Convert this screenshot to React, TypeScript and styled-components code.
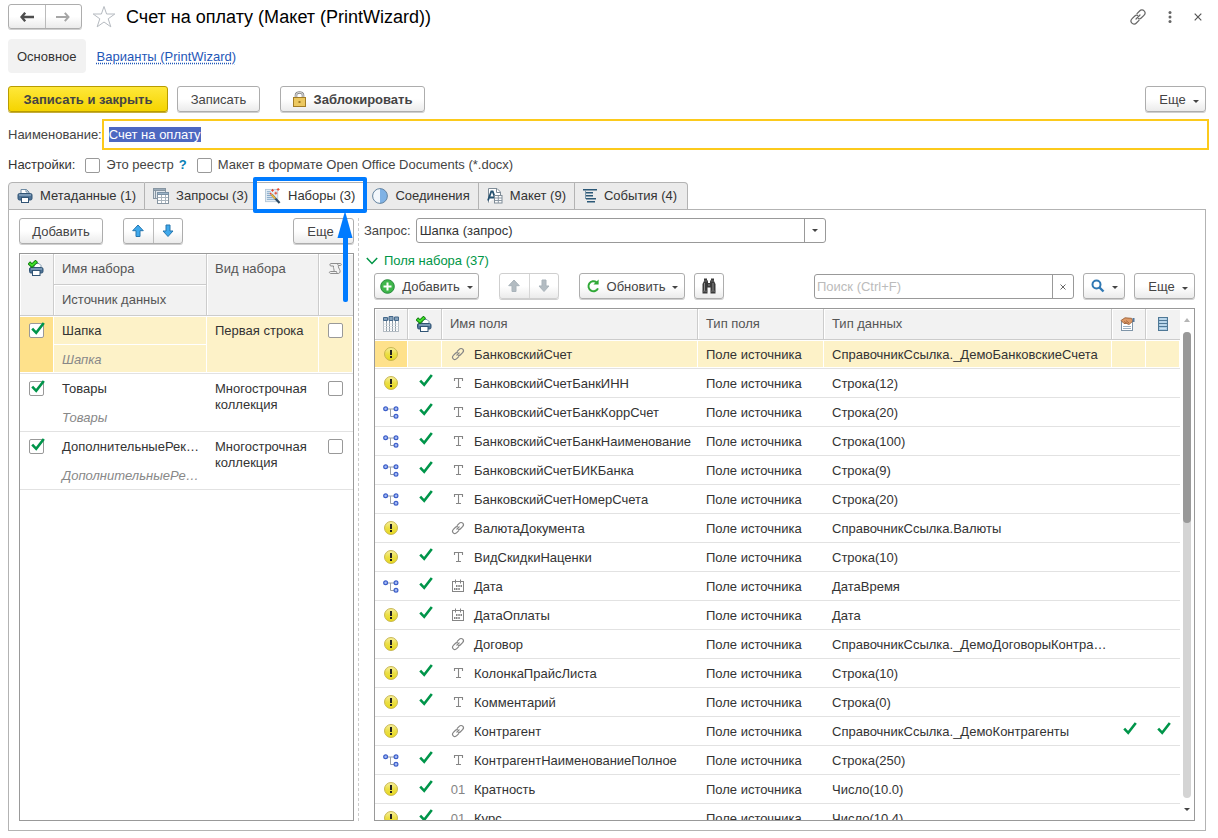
import React, { useEffect, useRef } from "react";
import styled, { createGlobalStyle, css } from "styled-components";

const GlobalStyle = createGlobalStyle`
  *, *::before, *::after { box-sizing: border-box; }
  body {
    margin: 0;
    background: #fff;
    color: #333;
    font: 13px/16px "Liberation Sans", Arial, sans-serif;
  }
  button, input, select { font: inherit; color: inherit; margin: 0; }
  svg { display: block; flex: none; }
`;

/* ---------- icons ---------- */

const ArrowLeft = () => (
  <svg width="14" height="10" viewBox="0 0 14 10">
    <path d="M5.2 .8L1.5 5L5.2 9.2M2 5H14" fill="none" stroke="#4d4d4d" strokeWidth="2.4" />
  </svg>
);
const ArrowRight = () => (
  <svg width="14" height="10" viewBox="0 0 14 10">
    <path d="M8.8 .8L12.5 5L8.8 9.2M12 5H0" fill="none" stroke="#a6a6a6" strokeWidth="2" />
  </svg>
);
const Star = () => (
  <svg width="24" height="24" viewBox="0 0 24 24">
    <path d="M12 1.5L14.6 9H22.8L16.2 13.8L18.8 21.8L12 17L5.2 21.8L7.8 13.8L1.2 9H9.4Z" fill="#fff" stroke="#b5bac0" />
  </svg>
);
const LinkIcon = ({ size = 16, color = "#666" }: { size?: number; color?: string }) => (
  <svg width={size} height={size} viewBox="0 0 16 16" fill="none" stroke={color} strokeWidth="1.2" strokeLinecap="round">
    <path d="M7 4.6L9.6 2C10.9.7 12.8.5 14.1 1.8C15.4 3.1 15.2 5 13.9 6.3L11.2 9C10.3 9.9 9.2 10 8.4 9.6" />
    <path d="M9 11.4L6.4 14C5.1 15.3 3.2 15.5 1.9 14.2C.6 12.9.8 11 2.1 9.7L4.8 7C5.7 6.1 6.8 6 7.6 6.4" />
    <path d="M6 10L10 6" />
  </svg>
);
const Dots = () => (
  <svg width="4" height="12" viewBox="0 0 4 12" fill="#666">
    <circle cx="2" cy="1.6" r="1.5" /><circle cx="2" cy="6" r="1.5" /><circle cx="2" cy="10.4" r="1.5" />
  </svg>
);
const Cross = ({ size = 8 }: { size?: number }) => (
  <svg width={size} height={size} viewBox="0 0 8 8" stroke="#555" strokeWidth="1.2">
    <path d="M.7.7L7.3 7.3M7.3.7L.7 7.3" />
  </svg>
);
const Lock = () => (
  <svg width="14" height="16" viewBox="0 0 14 16">
    <path d="M3 8V4C3 .6 10 .6 10 4V8" fill="none" stroke="#888" strokeWidth="2.6" />
    <path d="M3 8V4C3 .6 10 .6 10 4V8" fill="none" stroke="#e6e6e6" />
    <rect x=".5" y="6.5" width="12" height="9" fill="#ecc860" stroke="#a27c25" />
    <rect x="5.5" y="10" width="2" height="2" fill="#a27c25" />
  </svg>
);
const Caret = ({ color = "#444" }: { color?: string }) => (
  <svg width="6" height="3" viewBox="0 0 6 3"><path d="M0 0H6L3 3Z" fill={color} /></svg>
);
const CaretUp = () => (
  <svg width="6" height="4" viewBox="0 0 6 4"><path d="M0 4H6L3 0Z" fill="#b5b5b5" /></svg>
);
const BlockArrow = ({ down, muted }: { down?: boolean; muted?: boolean }) => (
  <svg width="12" height="14" viewBox="0 0 12 14">
    <path
      d={down ? "M4 1H8V7H11L6 12.5L1 7H4Z" : "M6 1L11.3 6.7H8V12.5H4V6.7H.7Z"}
      fill={muted ? "#b3bcc2" : "#3fa9ec"}
      stroke={muted ? "#a9b3ba" : "#2676ae"}
      strokeLinejoin="round"
    />
  </svg>
);
const Printer = () => (
  <svg width="16" height="16" viewBox="0 0 16 16">
    <path d="M4 6V1.5H9.5L12 4V6" fill="#fff" stroke="#6d8aa3" />
    <path d="M9 1.5V4H12" fill="none" stroke="#6d8aa3" />
    <rect x="1" y="5.5" width="14" height="6.5" rx="1.5" fill="#4f7396" stroke="#315475" />
    <path d="M2 7H14" stroke="#a8c2d8" />
    <rect x="4.5" y="9.5" width="7" height="5" fill="#fff" stroke="#315475" />
  </svg>
);
const PrinterCheck = () => (
  <svg width="16" height="17" viewBox="0 0 16 17">
    <path d="M6 8V3.5H11L13 5.5V8" fill="#fff" stroke="#7b95aa" />
    <rect x="1.5" y="7.5" width="13.5" height="5.5" rx="1.5" fill="#4f7396" stroke="#315475" />
    <path d="M3 9H14" stroke="#9fbad0" />
    <rect x="4.5" y="10.5" width="7.5" height="5" fill="#fff" stroke="#315475" />
    <path d="M.8 2.6L4 5.6L8.8 1" fill="none" stroke="#0e7a0e" strokeWidth="3.8" />
    <path d="M1.4 3.2L4 5.4L8.3 1.4" fill="none" stroke="#3fe02a" strokeWidth="2" />
  </svg>
);
const TablesIcon = () => (
  <svg width="16" height="16" viewBox="0 0 16 16">
    <rect x=".5" y=".5" width="12" height="10" fill="#dfe5ea" stroke="#8795a1" />
    <rect x=".5" y=".5" width="12" height="2" fill="#9aabba" stroke="#8795a1" />
    <path d="M2.5 3V10" stroke="#8795a1" />
    <rect x="4.5" y="4.5" width="11" height="11" fill="#fff" stroke="#8795a1" />
    <rect x="4.5" y="4.5" width="11" height="2" fill="#9db4c8" stroke="#7b91a4" />
    <path d="M8.5 7V15M12.5 7V15M5 9.5H15M5 12.5H15" stroke="#a9b4bd" />
  </svg>
);
const WandIcon = () => (
  <svg width="16" height="16" viewBox="0 0 17 17">
    <rect x=".5" y="1.5" width="13" height="13" fill="#e4edf5" stroke="#b7c9d8" />
    <path d="M2 4H6M2 6H5M2 8H7M2 10H8M2 12H11" stroke="#7da3c4" />
    <path d="M7 7L15.5 16" stroke="#314c63" strokeWidth="2.4" />
    <path d="M7 7L11 11.2" stroke="#f0b93a" strokeWidth="2" />
    <path d="M8 1V4M6.5 2.5H9.5M14 0V3M12.5 1.5H15.5M11.5 4V7M10 5.5H13M6 5V7M5 6H7" stroke="#e8432a" />
  </svg>
);
const HalfCircle = () => (
  <svg width="16" height="16" viewBox="0 0 16 16">
    <circle cx="8" cy="8" r="7.4" fill="#f3f7fb" />
    <path d="M8 .6A7.4 7.4 0 0 1 8 15.4Z" fill="#7fb2e5" />
    <circle cx="8" cy="8" r="7.4" fill="none" stroke="#64839f" />
  </svg>
);
const LayoutIcon = () => (
  <svg width="16" height="16" viewBox="0 0 16 16">
    <path d="M1.5 14.5V.5H10L13.5 4V7" fill="#fff" stroke="#7f8c97" />
    <path d="M9.5 1V4.5H13" fill="none" stroke="#7f8c97" />
    <path d="M1 12.5L4.3 3.5H5.7L9 12.5M2.5 9.5H7.5" fill="none" stroke="#24506f" strokeWidth="1.8" />
    <rect x="7.5" y="7.5" width="7.5" height="7.5" fill="#fff" stroke="#7f8c97" />
    <path d="M8 10H15M8 12.5H15M11.3 8V15" stroke="#8b98a3" />
  </svg>
);
const EventsIcon = () => (
  <svg width="14" height="14" viewBox="0 0 14 14">
    <path d="M0 .8H14M2 3.8H10M3 6.8H10M3 9.8H13M4 12.8H12" stroke="#2b5877" strokeWidth="1.4" />
    <path d="M2.5 1V10" stroke="#7c97aa" />
  </svg>
);
const ScrollIcon = () => (
  <svg width="14" height="16" viewBox="0 -2 14 16" fill="none" stroke="#8d8d8d">
    <path d="M3 1.5H12.5C13.5 1.5 13.5 3.5 12.5 3.5H10.5C9.8 5.5 11.5 6.5 12 8.5C12.5 11 11 11.5 10 11.5H3C1 11.5 1 9.5 2.5 9.5H8.5" />
    <path d="M3 1.5C1.5 1.5 1.5 4 3 4H5.5C5 6 6.5 7.5 6 9.5M10.5 3.5C9.5 3.5 9.5 1.5 10.5 1.5M8.5 9.5C8.5 10.5 9 11.5 10 11.5" />
  </svg>
);
const Chevron = () => (
  <svg width="12" height="8" viewBox="0 0 12 8"><path d="M.8 1L6 6.5L11.2 1" fill="none" stroke="#009646" strokeWidth="1.5" /></svg>
);
const PlusCircle = () => (
  <svg width="15" height="15" viewBox="0 0 15 15">
    <circle cx="7.5" cy="7.5" r="6.8" fill="#3fb74b" stroke="#24893a" />
    <path d="M7.5 3.5V11.5M3.5 7.5H11.5" stroke="#fff" strokeWidth="2" />
  </svg>
);
const Refresh = () => (
  <svg width="14" height="14" viewBox="0 0 14 14">
    <path d="M10.5 3.2A5 5 0 1 0 12 9.3" fill="none" stroke="#2fa836" strokeWidth="2" />
    <path d="M12.6.6V5.6H7.4Z" fill="#2fa836" />
  </svg>
);
const Binoculars = () => (
  <svg width="16" height="16" viewBox="0 0 16 16">
    <path d="M3 .5H6V2.5H7V5H9V2.5H10V.5H13V3L14.5 6V15.5H9.5V9.5H6.5V15.5H1.5V6L3 3Z" fill="#3a3a3a" />
    <path d="M3.5 5V13M12 5V13M8 6V8" stroke="#8c8c8c" />
    <path d="M1.5 13.2H6.5M9.5 13.2H14.5M3 3H6.5M9.5 3H13" stroke="#777" strokeWidth=".8" />
  </svg>
);
const Magnifier = () => (
  <svg width="14" height="14" viewBox="0 0 14 14" fill="none" stroke="#2f78b3">
    <circle cx="5.5" cy="5.5" r="4" strokeWidth="2" />
    <path d="M8.5 8.5L12.5 12.5" strokeWidth="2.4" />
  </svg>
);
const ColumnsIcon = () => (
  <svg width="16" height="16" viewBox="0 0 16 16">
    <rect x=".5" y="3" width="15" height="12.5" fill="#fff" stroke="#b4bcc3" />
    <path d="M3.5 5V15M6.5 5V15M9.5 5V15M12.5 5V15" stroke="#8796a2" />
    <path d="M.5 8H15.5M.5 10.5H15.5M.5 13H15.5" stroke="#d6dbe0" strokeWidth=".8" />
    <path d="M.5 1.5H4.5V4.5H.5ZM6 .5H10V4.5H6ZM11.5 1H15.5V4.5H11.5Z" fill="#86a2bb" stroke="#45688a" />
  </svg>
);
const HandIcon = () => (
  <svg width="16" height="14" viewBox="0 0 16 14">
    <rect x="1.5" y="4.5" width="11" height="9" fill="#fff" stroke="#7f95a8" />
    <path d="M3 9.5H11M3 11.5H11" stroke="#9db1c2" />
    <path d="M1 3.5L5 .8L11.5 1.3L13 4L9 7.5L6.5 6.5L4 6.5Z" fill="#dd9a68" stroke="#94582f" strokeWidth=".8" />
    <path d="M4 4.5L7.5 6.5M6 3.5L9 6" stroke="#94582f" strokeWidth=".7" />
    <rect x="12.5" y="1" width="2" height="4" fill="#55779a" />
  </svg>
);
const StackIcon = () => (
  <svg width="10" height="14" viewBox="0 0 10 14">
    <rect x=".5" y=".5" width="9" height="13" fill="#a9cbe4" stroke="#4f7896" />
    <path d="M1 3.5H9M1 6.5H9M1 9.5H9" stroke="#4f7896" />
    <path d="M2 2H8M2 5H8M2 8H8M2 11.5H8" stroke="#d4e7f4" strokeWidth=".8" />
  </svg>
);
const Warning = () => (
  <svg width="14" height="14" viewBox="0 0 14 14">
    <defs>
      <linearGradient id="warn" x1="0" y1="0" x2="0" y2="1">
        <stop offset="0" stopColor="#f6efa0" /><stop offset=".5" stopColor="#ecdf45" /><stop offset="1" stopColor="#e6d81f" />
      </linearGradient>
    </defs>
    <circle cx="7" cy="7" r="6.5" fill="url(#warn)" stroke="#c3b149" strokeWidth=".9" />
    <path d="M7 3V8M7 9V11" stroke="#222" strokeWidth="2" />
  </svg>
);
const TreeIcon = () => (
  <svg width="16" height="13" viewBox="0 0 16 13">
    <path d="M4 3H12M7.5 3V10.5H12" fill="none" stroke="#9aa0a6" />
    <g fill="#a6bbf5" stroke="#3d5fc9" strokeWidth="1.2">
      <circle cx="2.6" cy="2.8" r="1.9" /><circle cx="13" cy="2.8" r="1.9" /><circle cx="13" cy="10.2" r="1.9" />
    </g>
  </svg>
);
const Tick = () => (
  <svg width="14" height="13" viewBox="0 0 14 13">
    <path d="M1.2 6.6L5.2 10.8L12.8 1" fill="none" stroke="#00954a" strokeWidth="2.6" />
  </svg>
);
const TextType = () => (
  <svg width="16" height="14" viewBox="0 0 16 14">
    <path d="M4.5 5V2.5H12.5V5M8.5 2.5V11.5M6 11.5H11" fill="none" stroke="#858585" strokeWidth="1.1" />
  </svg>
);
const DateType = () => (
  <svg width="16" height="14" viewBox="0 0 16 14" fill="none" stroke="#858585">
    <rect x="2.5" y="2.5" width="11" height="10" />
    <path d="M5.5 .5V4.5M10.5 .5V4.5" />
    <path d="M6 7H7.5M8.3 7H9.8M10.5 7H12M4 10H5.5M6 10H7.5M8.3 10H9.8" strokeWidth="2" />
  </svg>
);
const LinkTypeIcon = () => (
  <svg width="16" height="14" viewBox="-2 -1 20 18" fill="none" stroke="#858585" strokeWidth="1.5" strokeLinecap="round">
    <path d="M7 4.6L9.6 2C10.9.7 12.8.5 14.1 1.8C15.4 3.1 15.2 5 13.9 6.3L11.2 9C10.3 9.9 9.2 10 8.4 9.6" />
    <path d="M9 11.4L6.4 14C5.1 15.3 3.2 15.5 1.9 14.2C.6 12.9.8 11 2.1 9.7L4.8 7C5.7 6.1 6.8 6 7.6 6.4" />
    <path d="M6.5 9.5L9.5 6.5" />
  </svg>
);

/* ---------- layout ---------- */

const Page = styled.div`
  display: flex;
  flex-direction: column;
  height: 100vh;
  padding: 4px 12px 7px 8px;
`;
const TitleBar = styled.header`
  display: flex;
  align-items: center;
  height: 25px;
`;
const Title = styled.h1`
  flex: 1;
  margin: 0 0 0 10px;
  font-size: 18px;
  line-height: 22px;
  font-weight: 400;
  color: #000;
`;
const StarButton = styled.button`
  margin-left: 10px;
  padding: 0;
  border: 0;
  background: none;
`;
const WindowTools = styled.div`
  display: flex;
  align-items: center;
  gap: 22px;
  padding-right: 4px;
`;
const PlainButton = styled.button`
  display: flex;
  padding: 0;
  border: 0;
  background: none;
`;
const FormNav = styled.nav`
  display: flex;
  align-items: center;
  gap: 11px;
  margin-top: 10px;
`;
const NavCurrent = styled.span`
  padding: 10px 9px 8px;
  border-radius: 4px;
  background: #f2f2f2;
`;
const NavLink = styled.a`
  padding-top: 2px;
  color: #1f57b8;
  text-decoration: underline dotted;
  text-underline-offset: 2px;
`;
const CommandBar = styled.div`
  display: flex;
  margin-top: 13px;
`;
const Bar = styled.div`
  display: flex;
`;
const Gap = styled.span<{ $w?: number }>`
  flex: ${(p) => (p.$w ? `0 0 ${p.$w}px` : "1")};
`;
const Button = styled.button<{ $w: number; $primary?: boolean; $bold?: boolean }>`
  display: inline-flex;
  align-items: center;
  justify-content: center;
  gap: 7px;
  width: ${(p) => p.$w}px;
  height: 26px;
  padding: 2px 0 0;
  border: 1px solid #adadad;
  border-radius: 3px;
  background: linear-gradient(#fff 50%, #ebebeb);
  box-shadow: 0 1px 0 #cfcfcf;
  color: #444;
  white-space: nowrap;
  & > svg:first-child { margin-bottom: 2px; }
  ${(p) => p.$bold && css`font-weight: 700;`}
  ${(p) =>
    p.$primary &&
    css`
      border-color: #b89c00;
      background: linear-gradient(#ffe83a, #f5d400);
      box-shadow: 0 1px 0 #c5ad3a;
    `}
`;
const MoreButton = styled(Button)`
  padding-left: 7px;
  & > svg { margin-top: 2px; }
`;
const Pair = styled.div<{ $muted?: boolean; $wide?: boolean; $h?: number }>`
  display: flex;
  width: ${(p) => (p.$wide ? 74 : 60)}px;
  height: ${(p) => p.$h ?? 26}px;
  border: 1px solid ${(p) => (p.$muted ? "#cfcfcf" : "#adadad")};
  border-radius: 3px;
  background: linear-gradient(#fff 50%, #ebebeb);
  box-shadow: 0 1px 0 #cfcfcf;
  & > button {
    flex: 1;
    display: flex;
    align-items: center;
    justify-content: center;
    padding: 0;
    border: 0;
    background: none;
  }
  & > button + button {
    border-left: 1px solid ${(p) => (p.$muted ? "#d6d6d6" : "#bbb")};
  }
`;
const NameRow = styled.div`
  display: flex;
  align-items: center;
  margin: 7px -3px 0 0;
`;
const Label = styled.label`
  color: #444;
`;
const NameInput = styled.input`
  flex: 1;
  min-width: 0;
  height: 31px;
  padding: 0 5px;
  border: 2px solid #fcca1c;
  outline: 0;
  background: #fff;
  &::selection { background: #4d68c1; color: #fff; }
`;
const SettingsRow = styled.div`
  display: flex;
  align-items: center;
  height: 16px;
  margin: 7px 0 9px;
`;
const CheckLabel = styled.label`
  display: flex;
  align-items: center;
  gap: 6px;
  margin-left: 10px;
  color: #444;
`;
const Help = styled.a`
  margin-left: 5px;
  color: #0a7fb5;
  font-weight: 700;
  text-decoration: none;
`;
const BoxWrap = styled.span`
  position: relative;
  display: block;
  width: 15px;
  height: 15px;
  & > svg {
    position: absolute;
    left: 2px;
    top: -1px;
    pointer-events: none;
  }
`;
const Box = styled.input`
  appearance: none;
  display: block;
  width: 15px;
  height: 15px;
  border: 1px solid #999;
  border-radius: 2px;
  background: #fff;
`;

const Tabs = styled.div`
  display: flex;
  height: 28px;
  margin-bottom: -1px;
`;
const Tab = styled.button<{ $active?: boolean }>`
  position: relative;
  display: flex;
  align-items: center;
  gap: 7px;
  padding: 0 8px;
  border: 1px solid #b3b3b3;
  border-left-width: 0;
  background: ${(p) => (p.$active ? "#fff" : "#ebebeb")};
  border-bottom-color: ${(p) => (p.$active ? "#fff" : "#b3b3b3")};
  color: #333;
  &:first-child { border-left-width: 1px; border-top-left-radius: 4px; }
  &:last-child { border-top-right-radius: 4px; padding-right: 10px; }
  ${(p) => p.$active && css`z-index: 1;`}
`;
const Highlight = styled.span`
  position: absolute;
  inset: -6px -4px -4px;
  border: 4px solid #007bff;
  border-radius: 2px;
`;
const Pointer = styled.svg`
  position: absolute;
  right: 10px;
  top: 28px;
  pointer-events: none;
`;
const Panel = styled.div`
  flex: 1;
  min-height: 0;
  display: flex;
  padding: 8px 10px 9px;
  border: 1px solid #b3b3b3;
`;
const Column = styled.section`
  display: flex;
  flex-direction: column;
  gap: 9px;
  min-height: 0;
`;
const SetsColumn = styled(Column)`
  flex: 0 0 335px;
`;
const FieldsColumn = styled(Column)`
  flex: 1;
  min-width: 0;
  margin-left: 4px;
  padding-left: 5px;
  border-left: 1px dashed #ccc;
  gap: 0;
`;
const QueryRow = styled.div`
  display: flex;
  align-items: center;
  gap: 5px;
`;
const SelectWrap = styled.div`
  position: relative;
  flex: 0 1 410px;
`;
const Select = styled.select`
  appearance: none;
  display: block;
  width: 100%;
  height: 25px;
  padding: 0 24px 0 3px;
  border: 1px solid #999;
  border-radius: 3px;
  background: #fff;
`;
const SelectArrow = styled.span`
  position: absolute;
  inset: 1px 1px 1px auto;
  width: 21px;
  display: flex;
  align-items: center;
  justify-content: center;
  border-left: 1px solid #999;
  pointer-events: none;
`;
const GroupTitle = styled.button`
  display: flex;
  align-items: center;
  align-self: flex-start;
  gap: 6px;
  height: 16px;
  margin: 10px 0 4px 2px;
  padding: 0;
  border: 0;
  background: none;
  color: #009646;
`;
const GroupBody = styled.div`
  flex: 1;
  min-height: 0;
  display: flex;
  flex-direction: column;
  gap: 9px;
  margin-left: 10px;
`;
const Search = styled.div`
  display: flex;
  flex: 0 1 260px;
  height: 25px;
  margin-top: 1px;
  border: 1px solid #999;
  border-radius: 3px;
  & > input {
    flex: 1;
    min-width: 0;
    padding: 0 2px;
    border: 0;
    outline: 0;
    background: none;
  }
  & > input::placeholder { color: #bbb; }
  & > button {
    display: flex;
    align-items: center;
    justify-content: center;
    width: 21px;
    padding: 0;
    border: 0;
    border-left: 1px solid #999;
    background: none;
  }
`;

/* ---------- tables ---------- */

const Frame = styled.div`
  flex: 1;
  min-height: 0;
  display: flex;
  border: 1px solid #999;
`;
const Viewport = styled.div`
  flex: 1;
  min-width: 0;
  overflow: hidden;
`;
const Table = styled.table`
  width: 100%;
  table-layout: fixed;
  border-collapse: separate;
  border-spacing: 0;
`;
const Th = styled.th`
  height: 31px;
  padding: 7px 8px 0;
  border-right: 1px solid #ccc;
  border-bottom: 1px solid #ccc;
  background: #f2f2f2;
  box-shadow: inset 1px 1px #fff;
  color: #555;
  font-weight: 400;
  text-align: left;
  vertical-align: top;
  white-space: nowrap;
  tr:first-child > &:last-child { border-right: 0; }
  & > svg { margin: 0 auto; }
`;
const FieldTh = styled(Th)`
  padding: 0 8px;
  vertical-align: middle;
`;
const IconTh = styled(FieldTh)`
  padding: 0 1px 0 0;
`;
const SetIconTh = styled(Th)`
  padding: 6px 2px 0 0;
`;
const Tr = styled.tr<{ $selected?: boolean }>`
  & > td {
    border-bottom: 1px solid #e2e2e2;
  }
  ${(p) =>
    p.$selected &&
    css`
      & > td {
        background: #fdf2c8;
        box-shadow: inset -1px 1px #fff, inset 0 -1px #fff;
      }
      & > td:first-child { background: #fee18b; }
    `}
`;
const SetTd = styled.td`
  height: 58px;
  padding: 7px 8px 0;
  vertical-align: top;
`;
const CheckTd = styled(SetTd)`
  padding: 7px 0 0 9px;
`;
const NameTd = styled.td`
  height: 58px;
  padding: 0;
  vertical-align: top;
`;
const SetName = styled.div<{ $selected?: boolean }>`
  height: 29px;
  padding: 7px 7px 0 8px;
  overflow: hidden;
  white-space: nowrap;
  text-overflow: ellipsis;
  border-bottom: 1px solid ${(p) => (p.$selected ? "#fff" : "transparent")};
`;
const SetSource = styled.div`
  padding: 7px 7px 0 8px;
  overflow: hidden;
  white-space: nowrap;
  text-overflow: ellipsis;
  font-style: italic;
  color: #888;
`;
const Td = styled.td`
  height: 29px;
  padding: 2px 4px 0 8px;
  overflow: hidden;
  white-space: nowrap;
  text-overflow: ellipsis;
`;
const IconTd = styled(Td)`
  padding: 0 2px 0 0;
  & > svg { margin: 0 auto; }
`;
const TickTd = styled(IconTd)`
  padding: 0 0 6px 2px;
`;
const FieldName = styled.span`
  display: flex;
  align-items: center;
  gap: 8px;
  & > svg { margin-bottom: 2px; }
`;
const NumberType = styled.span`
  width: 16px;
  color: #858585;
  text-align: center;
`;
const ScrollBar = styled.div`
  flex: 0 0 14px;
  display: flex;
  flex-direction: column;
  align-items: center;
  justify-content: space-between;
  padding: 9px 0;
`;
const Track = styled.div`
  flex: 1;
  width: 8px;
  margin: 10px 0;
  border-radius: 4px;
  background: #d4d4d4;
`;
const Thumb = styled.div`
  height: 41%;
  border-radius: 4px;
  background: #999;
`;

/* ---------- data ---------- */

const sets = [
  { name: "Шапка", source: "Шапка", kind: "Первая строка" },
  { name: "Товары", source: "Товары", kind: "Многострочная коллекция" },
  { name: "ДополнительныеРеквизиты", source: "ДополнительныеРеквизиты", kind: "Многострочная коллекция" },
];

type Kind = "link" | "text" | "date" | "number";
type Field = { name: string; type: string; kind: Kind; tree?: boolean; print?: boolean; extra?: boolean };
const fields: Field[] = [
  { name: "БанковскийСчет", type: "СправочникСсылка._ДемоБанковскиеСчета", kind: "link" },
  { name: "БанковскийСчетБанкИНН", type: "Строка(12)", kind: "text", print: true },
  { name: "БанковскийСчетБанкКоррСчет", type: "Строка(20)", kind: "text", tree: true, print: true },
  { name: "БанковскийСчетБанкНаименование", type: "Строка(100)", kind: "text", tree: true, print: true },
  { name: "БанковскийСчетБИКБанка", type: "Строка(9)", kind: "text", tree: true, print: true },
  { name: "БанковскийСчетНомерСчета", type: "Строка(20)", kind: "text", tree: true, print: true },
  { name: "ВалютаДокумента", type: "СправочникСсылка.Валюты", kind: "link" },
  { name: "ВидСкидкиНаценки", type: "Строка(10)", kind: "text", print: true },
  { name: "Дата", type: "ДатаВремя", kind: "date", tree: true, print: true },
  { name: "ДатаОплаты", type: "Дата", kind: "date", print: true },
  { name: "Договор", type: "СправочникСсылка._ДемоДоговорыКонтрагентов", kind: "link" },
  { name: "КолонкаПрайсЛиста", type: "Строка(10)", kind: "text", print: true },
  { name: "Комментарий", type: "Строка(0)", kind: "text", print: true },
  { name: "Контрагент", type: "СправочникСсылка._ДемоКонтрагенты", kind: "link", extra: true },
  { name: "КонтрагентНаименованиеПолное", type: "Строка(250)", kind: "text", tree: true, print: true },
  { name: "Кратность", type: "Число(10.0)", kind: "number", print: true },
  { name: "Курс", type: "Число(10.4)", kind: "number", print: true },
];

const typeIcons: Record<Kind, React.ReactNode> = {
  link: <LinkTypeIcon />,
  text: <TextType />,
  date: <DateType />,
  number: <NumberType>01</NumberType>,
};

function CheckBox({ id, checked, label }: { id?: string; checked?: boolean; label?: string }) {
  return (
    <BoxWrap>
      <Box type="checkbox" id={id} defaultChecked={checked} aria-label={label} />
      {checked && <Tick />}
    </BoxWrap>
  );
}

const More = () => (
  <MoreButton $w={61} type="button">
    <span>Еще</span>
    <Caret />
  </MoreButton>
);

function SetsTable() {
  return (
    <Frame>
      <Viewport>
        <Table>
          <colgroup>
            <col style={{ width: 34 }} />
            <col />
            <col style={{ width: 112 }} />
            <col style={{ width: 34 }} />
          </colgroup>
          <thead>
            <tr>
              <SetIconTh rowSpan={2} aria-label="Печать"><PrinterCheck /></SetIconTh>
              <Th>Имя набора</Th>
              <Th rowSpan={2}>Вид набора</Th>
              <SetIconTh rowSpan={2} aria-label="Сценарий"><ScrollIcon /></SetIconTh>
            </tr>
            <tr>
              <Th>Источник данных</Th>
            </tr>
          </thead>
          <tbody>
            {sets.map((s, i) => (
              <Tr key={s.name} $selected={i === 0}>
                <CheckTd><CheckBox checked label={`Печать: ${s.name}`} /></CheckTd>
                <NameTd>
                  <SetName $selected={i === 0}>{s.name}</SetName>
                  <SetSource>{s.source}</SetSource>
                </NameTd>
                <SetTd>{s.kind}</SetTd>
                <CheckTd><CheckBox label={`Сценарий: ${s.name}`} /></CheckTd>
              </Tr>
            ))}
          </tbody>
        </Table>
      </Viewport>
    </Frame>
  );
}

function FieldsTable() {
  return (
    <Frame>
      <Viewport>
        <Table>
          <colgroup>
            <col style={{ width: 33 }} />
            <col style={{ width: 34 }} />
            <col style={{ width: 256 }} />
            <col style={{ width: 126 }} />
            <col />
            <col style={{ width: 34 }} />
            <col style={{ width: 34 }} />
          </colgroup>
          <thead>
            <tr>
              <IconTh aria-label="Источник"><ColumnsIcon /></IconTh>
              <IconTh aria-label="Печать"><PrinterCheck /></IconTh>
              <FieldTh>Имя поля</FieldTh>
              <FieldTh>Тип поля</FieldTh>
              <FieldTh>Тип данных</FieldTh>
              <IconTh aria-label="Представление"><HandIcon /></IconTh>
              <IconTh aria-label="Реквизиты"><StackIcon /></IconTh>
            </tr>
          </thead>
          <tbody>
            {fields.map((f, i) => (
              <Tr key={f.name} $selected={i === 0}>
                <IconTd>{f.tree ? <TreeIcon /> : <Warning />}</IconTd>
                <TickTd>{f.print && <Tick />}</TickTd>
                <Td><FieldName>{typeIcons[f.kind]}{f.name}</FieldName></Td>
                <Td>Поле источника</Td>
                <Td>{f.type}</Td>
                <TickTd>{f.extra && <Tick />}</TickTd>
                <TickTd>{f.extra && <Tick />}</TickTd>
              </Tr>
            ))}
          </tbody>
        </Table>
      </Viewport>
      <ScrollBar>
        <CaretUp />
        <Track><Thumb /></Track>
        <Caret />
      </ScrollBar>
    </Frame>
  );
}

export default function App() {
  const nameRef = useRef<HTMLInputElement>(null);
  useEffect(() => {
    nameRef.current?.focus();
    nameRef.current?.select();
  }, []);

  return (
    <>
      <GlobalStyle />
      <Page>
        <TitleBar>
          <Pair $wide $h={25}>
            <button type="button" aria-label="Назад"><ArrowLeft /></button>
            <button type="button" aria-label="Вперед"><ArrowRight /></button>
          </Pair>
          <StarButton type="button" aria-label="В избранное"><Star /></StarButton>
          <Title>Счет на оплату (Макет (PrintWizard))</Title>
          <WindowTools>
            <PlainButton type="button" aria-label="Ссылка"><LinkIcon /></PlainButton>
            <PlainButton type="button" aria-label="Меню"><Dots /></PlainButton>
            <PlainButton type="button" aria-label="Закрыть"><Cross /></PlainButton>
          </WindowTools>
        </TitleBar>

        <FormNav>
          <NavCurrent>Основное</NavCurrent>
          <NavLink href="#variants">Варианты (PrintWizard)</NavLink>
        </FormNav>

        <CommandBar>
          <Button $w={160} $primary $bold type="button">Записать и закрыть</Button>
          <Gap $w={9} />
          <Button $w={83} type="button">Записать</Button>
          <Gap $w={20} />
          <Button $w={145} $bold type="button"><Lock />Заблокировать</Button>
          <Gap />
          <More />
        </CommandBar>

        <NameRow>
          <Label htmlFor="name">Наименование:</Label>
          <NameInput id="name" ref={nameRef} defaultValue="Счет на оплату" />
        </NameRow>

        <SettingsRow>
          <span>Настройки:</span>
          <CheckLabel htmlFor="registry"><CheckBox id="registry" />Это реестр</CheckLabel>
          <Help href="#help">?</Help>
          <CheckLabel htmlFor="docx"><CheckBox id="docx" />Макет в формате Open Office Documents (*.docx)</CheckLabel>
        </SettingsRow>

        <Tabs role="tablist">
          <Tab role="tab" type="button"><Printer />Метаданные (1)</Tab>
          <Tab role="tab" type="button"><TablesIcon />Запросы (3)</Tab>
          <Tab role="tab" type="button" aria-selected $active>
            <WandIcon />Наборы (3)
            <Highlight />
            <Pointer width="16" height="92" viewBox="0 0 16 92" fill="#007bff">
              <path d="M8 0L15.5 27H.5Z" />
              <rect x="6" y="20" width="5" height="71" rx="2" />
            </Pointer>
          </Tab>
          <Tab role="tab" type="button"><HalfCircle />Соединения</Tab>
          <Tab role="tab" type="button"><LayoutIcon />Макет (9)</Tab>
          <Tab role="tab" type="button"><EventsIcon />События (4)</Tab>
        </Tabs>

        <Panel role="tabpanel">
          <SetsColumn>
            <Bar>
              <Button $w={84} type="button">Добавить</Button>
              <Gap $w={20} />
              <Pair>
                <button type="button" aria-label="Вверх"><BlockArrow /></button>
                <button type="button" aria-label="Вниз"><BlockArrow down /></button>
              </Pair>
              <Gap />
              <More />
            </Bar>
            <SetsTable />
          </SetsColumn>

          <FieldsColumn>
            <QueryRow>
              <Label htmlFor="query">Запрос:</Label>
              <SelectWrap>
                <Select id="query" defaultValue="header">
                  <option value="header">Шапка (запрос)</option>
                </Select>
                <SelectArrow><Caret /></SelectArrow>
              </SelectWrap>
            </QueryRow>
            <GroupTitle type="button" aria-expanded><Chevron />Поля набора (37)</GroupTitle>
            <GroupBody>
              <Bar>
                <Button $w={105} type="button"><PlusCircle />Добавить<Caret /></Button>
                <Gap $w={20} />
                <Pair $muted>
                  <button type="button" disabled aria-label="Вверх"><BlockArrow muted /></button>
                  <button type="button" disabled aria-label="Вниз"><BlockArrow muted down /></button>
                </Pair>
                <Gap $w={20} />
                <Button $w={106} type="button"><Refresh />Обновить<Caret /></Button>
                <Gap $w={9} />
                <Button $w={30} type="button" aria-label="Найти"><Binoculars /></Button>
                <Gap />
                <Search>
                  <input type="text" placeholder="Поиск (Ctrl+F)" aria-label="Поиск" />
                  <button type="button" aria-label="Очистить"><Cross size={6} /></button>
                </Search>
                <Gap $w={9} />
                <Button $w={42} type="button" aria-label="Поиск"><Magnifier /><Caret /></Button>
                <Gap $w={9} />
                <More />
              </Bar>
              <FieldsTable />
            </GroupBody>
          </FieldsColumn>
        </Panel>
      </Page>
    </>
  );
}
